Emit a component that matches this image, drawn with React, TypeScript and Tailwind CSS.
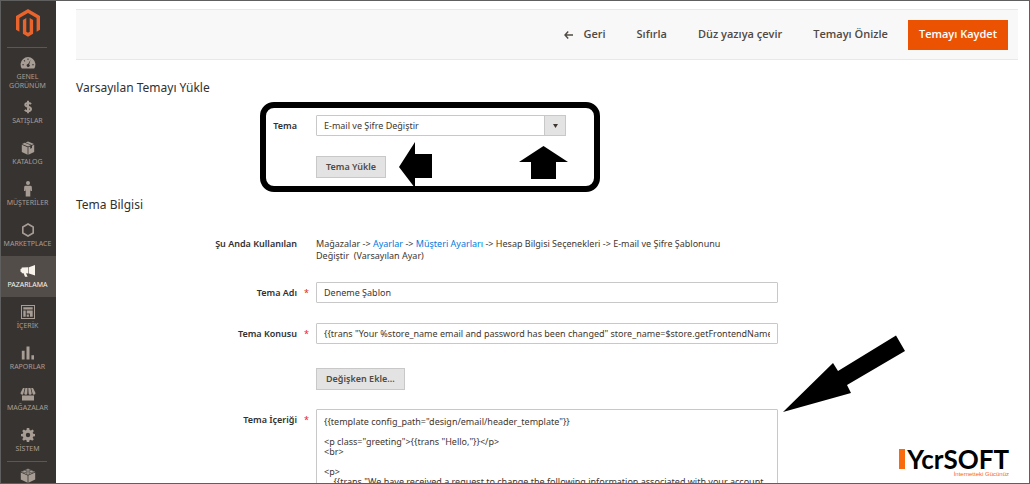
import type { ReactNode } from "react";

type MenuItem = {
  label: string;
  icon: ReactNode;
  active?: boolean;
  tall?: boolean;
};

function Icon({ children, w = 14 }: { children: ReactNode; w?: number }) {
  return (
    <svg width={w} height="14" viewBox={`0 0 ${w} 14`} fill="currentColor" aria-hidden="true">
      {children}
    </svg>
  );
}

const menu: MenuItem[] = [
  {
    label: "Genel Görünüm",
    tall: true,
    icon: (
      <Icon w={16}>
        <path
          fillRule="evenodd"
          d="M1.8 12.5A7.4 7.4 0 1 1 14.2 12.5ZM2.3 8.2h1.6v1H2.3ZM12.2 8.2h1.6v1h-1.6ZM3.6 4.6l.7-.6 1 1-.6.7ZM7.5 2.4h1v1.5h-1ZM10.6 3.8l-1.5 4.6a1.5 1.5 0 1 1-1-.3Z"
        />
      </Icon>
    ),
  },
  {
    label: "Satışlar",
    icon: (
      <Icon>
        <path
          d="M10 4.1C9.4 3.4 8.4 3 7.1 3 5.4 3 4.3 3.7 4.3 4.8 4.3 7.4 10 6.1 10 9.1 10 10.4 8.8 11.2 7 11.2 5.6 11.2 4.5 10.7 3.8 9.8M7 .8V13.2"
          fill="none"
          stroke="currentColor"
          strokeWidth="2"
        />
      </Icon>
    ),
  },
  {
    label: "Katalog",
    icon: (
      <Icon>
        <path d="M7 .4 13 2.9 10.8 3.9 4.7 1.4ZM3.8 1.8 9.9 4.3 7 5.6 1 2.9ZM.8 3.8 6.6 6.3V13.8L.8 11ZM7.4 6.3 9.2 5.5V7.8L11 7V4.7L13.2 3.8V11L7.4 13.8Z" />
      </Icon>
    ),
  },
  {
    label: "Müşteriler",
    icon: (
      <svg width="10" height="16" viewBox="0 0 10 16" fill="currentColor" aria-hidden="true">
        <circle cx="5" cy="2.1" r="2" />
        <path d="M2.5 4.7h5Q8.7 4.7 8.8 6L9 10H7.7L7.3 8V15.6H2.7V8L2.3 10H1L1.2 6Q1.3 4.7 2.5 4.7Z" />
      </svg>
    ),
  },
  {
    label: "Marketplace",
    icon: (
      <Icon>
        <path d="M7 1 12.2 4V10L7 13 1.8 10V4Z" fill="none" stroke="currentColor" strokeWidth="1.6" />
      </Icon>
    ),
  },
  {
    label: "Pazarlama",
    active: true,
    icon: (
      <Icon w={16}>
        <path d="M15 1V11.5L9 9.5V3.2ZM8.4 3.3V9.4L6 9.3 7.6 12.8H5L3.6 9.2H1.8L1.5 8 .5 7.7V5L1.5 4.7 1.8 3.5Z" />
      </Icon>
    ),
  },
  {
    label: "İçerik",
    icon: (
      <Icon>
        <path
          fillRule="evenodd"
          d="M0 0H14V14H0ZM1 1V13H13V1ZM2.3 2.3H11.7V4.6H2.3ZM2.3 5.6H4.7V11.7H2.3ZM5.7 5.6H11.7V11.7H8.9V8.5H5.7ZM5.7 9.5H7.9V11.7H5.7Z"
        />
      </Icon>
    ),
  },
  {
    label: "Raporlar",
    icon: (
      <Icon>
        <path d="M.8 4.8H3.6V13.6H.8ZM5.5 .4H8.5V13.6H5.5ZM10.4 9.3H13V13.6H10.4Z" />
      </Icon>
    ),
  },
  {
    label: "Mağazalar",
    icon: (
      <Icon w={16}>
        <path d="M3 1H4.7L3.4 6.5Q3 8 1.6 7.6 .2 7.2 .6 5.8ZM5.4 1H7.5L7.3 6.5Q7.1 7.9 5.6 7.8 4.1 7.6 4.3 6.3ZM8.3 1H10.5L11.7 6.3Q11.9 7.6 10.4 7.8 8.8 7.9 8.6 6.5ZM11.2 1H13L15.4 5.8Q15.8 7.2 14.4 7.6 13 8 12.5 6.5ZM2 8.6H14V13.6H2Z" />
      </Icon>
    ),
  },
  {
    label: "Sistem",
    icon: (
      <Icon>
        <path
          fillRule="evenodd"
          d="M5.8 0H8.2L8.6 2 9.9 2.5 11.6 1.4 12.9 3 11.7 4.5 12.2 5.7 14 6V8.2L12.2 8.5 11.7 9.7 12.8 11.2 11.2 12.8 9.7 11.7 8.5 12.2 8.2 14H5.8L5.5 12.2 4.3 11.7 2.8 12.8 1.2 11.2 2.3 9.7 1.8 8.5 0 8.2V6L1.8 5.7 2.3 4.5 1.2 3 2.8 1.4 4.3 2.5 5.5 2ZM7 4.8A2.2 2.2 0 1 0 7 9.2 2.2 2.2 0 1 0 7 4.8Z"
        />
      </Icon>
    ),
  },
];

function MagentoLogo() {
  return (
    <svg width="24" height="28" viewBox="0 0 24 28" fill="#e8642c" aria-label="Magento" role="img">
      <path d="M12 0 24 7V20.8L20.6 22.8V9L12 4 3.4 9V22.8L0 20.8V7Z" />
      <path d="M6.9 10.9 10.3 9V22.8L12 23.8 13.7 22.8V9L17.1 10.9V24.8L12 27.7 6.9 24.8Z" />
    </svg>
  );
}

function Sidebar() {
  return (
    <aside className="flex w-[55px] shrink-0 flex-col bg-[#373330] text-[#a79d95]">
      <a href="#" className="flex justify-center pt-2 pr-0.5 pb-2.5">
        <MagentoLogo />
      </a>
      <hr className="ml-1.5 w-10 border-[#5e5751]" />
      <nav>
        <ul>
          {menu.map((item) => (
            <li key={item.label}>
              <a
                href="#"
                className={`flex flex-col items-center gap-0.5 pt-2 pr-0.5 ${item.tall ? "h-[44px]" : "h-[41px]"} ${
                  item.active ? "bg-[#524d49] text-[#f7f3eb]" : ""
                }`}
              >
                <span className="flex h-3.5 items-center">{item.icon}</span>
                <span lang="tr" className="px-2 text-center text-[7px] leading-[9px] uppercase">
                  {item.label}
                </span>
              </a>
            </li>
          ))}
        </ul>
      </nav>
      <hr className="ml-1.5 w-10 border-[#5e5751]" />
      <a href="#" aria-label="Partners" className="flex justify-center pt-1.5 pr-0.5">
        <svg width="16" height="15" viewBox="0 0 16 15" fill="currentColor" aria-hidden="true">
          <path d="M.8 4.5 7.6 7.6V14.8L.8 11.5ZM15.2 4.5 8.4 7.6V14.8L15.2 11.5Z" />
          <path d="M8 .8 15 3.8 8 7 1 3.8Z" />
          <g stroke="#373330" strokeWidth=".5">
            <ellipse cx="8" cy="1.9" rx="1.9" ry="1.1" />
            <ellipse cx="4.6" cy="3.5" rx="1.9" ry="1.1" />
            <ellipse cx="11.4" cy="3.5" rx="1.9" ry="1.1" />
            <ellipse cx="8" cy="5.1" rx="1.9" ry="1.1" />
          </g>
        </svg>
      </a>
    </aside>
  );
}

function Toolbar() {
  return (
    <div className="flex h-[51px] items-center justify-end border-y border-[#e8e8e8] bg-[#f8f8f8] pr-2.5 font-['Open_Sans',sans-serif] text-[11px] font-semibold text-[#514943]">
      <button type="button" className="mr-[31px] flex items-center gap-2.5">
        <svg width="9" height="8" viewBox="0 0 9 8" fill="none" stroke="currentColor" strokeWidth="1.4" aria-hidden="true">
          <path d="M4.2 .6 1 4 4.2 7.4M1 4H9" />
        </svg>
        Geri
      </button>
      <button type="button" className="mr-[31px]">Sıfırla</button>
      <button type="button" className="mr-[31px]">Düz yazıya çevir</button>
      <button type="button" className="mr-5">Temayı Önizle</button>
      <button type="button" className="h-[30px] bg-[#eb5202] px-[11px] text-white">
        Temayı Kaydet
      </button>
    </div>
  );
}

function Field({
  label,
  id,
  required,
  children,
}: {
  label: string;
  id: string;
  required?: boolean;
  children: ReactNode;
}) {
  return (
    <div className="flex">
      <label htmlFor={id} className="w-[221px] shrink-0 pt-1 text-right font-semibold leading-[13px] text-[#303030]">
        {label}
      </label>
      <span className="w-[19px] shrink-0 pt-1 text-center leading-[13px] text-[#e22626]">
        {required && "*"}
      </span>
      <div className="min-w-0 max-w-[462px] flex-1">{children}</div>
    </div>
  );
}

const inputClass =
  "block rounded-[1px] border border-[#c8c8c8] bg-white px-[7px] text-[#41362f] outline-none focus:border-[#007bdb]";

const buttonClass =
  "block h-[22px] border border-[#c8c8c8] bg-[#e3e3e3] px-[9px] font-semibold text-[#514943]";

const templateText = `{{template config_path="design/email/header_template"}}

<p class="greeting">{{trans "Hello,"}}</p>
<br>

<p>
    {{trans "We have received a request to change the following information associated with your account
at %store_name: email, password." store_name=$store.getFrontendName()}}
</p>`;

function LoadTemplate() {
  return (
    <section>
      <h2 className="text-[12px] leading-4 text-[#303030]">Varsayılan Temayı Yükle</h2>
      <div className="relative mt-1.5 ml-[184px] h-[90px] w-[340px] rounded-[14px] border-[6px] border-black">
        <div className="flex pt-[7px]">
          <label htmlFor="template" className="w-[31px] shrink-0 pt-1 text-right font-semibold leading-[13px]">
            Tema
          </label>
          <div className="ml-[19px]">
            <div className="relative">
              <select id="template" className={`${inputClass} h-[21px] w-[250px] appearance-none pr-6`}>
                <option>E-mail ve Şifre Değiştir</option>
              </select>
              <span className="pointer-events-none absolute inset-y-0 right-0 flex w-[22px] items-center justify-center border border-[#c8c8c8] bg-[#e3e3e3]">
                <svg width="5" height="4" viewBox="0 0 5 4" fill="#41362f" aria-hidden="true">
                  <path d="M0 0H5L2.5 4Z" />
                </svg>
              </span>
            </div>
            <button type="button" className={`${buttonClass} mt-5`}>
              Tema Yükle
            </button>
          </div>
        </div>
        <svg className="absolute top-[34px] left-[133px]" width="33" height="46" viewBox="0 0 33 46" aria-hidden="true">
          <path d="M0 25 16 0V12H33V36H16V46Z" />
        </svg>
        <svg className="absolute top-[38px] left-[253px]" width="49" height="33" viewBox="0 0 49 33" aria-hidden="true">
          <path d="M24.5 0 49 16H37V33H12V16H0Z" />
        </svg>
      </div>
    </section>
  );
}

function TemplateInfo() {
  return (
    <section className="mt-[5px]">
      <h2 className="text-[12px] leading-4 text-[#303030]">Tema Bilgisi</h2>
      <div className="mt-[25px] flex leading-3">
        <span className="w-[221px] shrink-0 text-right font-semibold">Şu Anda Kullanılan</span>
        <p className="ml-[19px] text-[#41362f]">
          Mağazalar -&gt; <a href="#" className="text-[#007bdb]">Ayarlar</a> -&gt;{" "}
          <a href="#" className="text-[#007bdb]">Müşteri Ayarları</a> -&gt; Hesap Bilgisi Seçenekleri -&gt; E-mail ve
          Şifre Şablonunu
          <br />
          Değiştir&nbsp; (Varsayılan Ayar)
        </p>
      </div>
      <div className="mt-5 flex flex-col gap-5">
        <Field label="Tema Adı" id="code" required>
          <input id="code" className={`${inputClass} h-[21px] w-full`} defaultValue="Deneme Şablon" />
        </Field>
        <Field label="Tema Konusu" id="subject" required>
          <input
            id="subject"
            className={`${inputClass} h-[21px] w-full`}
            defaultValue={'{{trans "Your %store_name email and password has been changed" store_name=$store.getFrontendName()}}'}
          />
        </Field>
      </div>
      <button type="button" className={`${buttonClass} mt-6 mb-[19px] ml-60`}>
        Değişken Ekle...
      </button>
      <div className="relative">
        <Field label="Tema İçeriği" id="text" required>
          <textarea
            id="text"
            rows={24}
            className={`${inputClass} w-full resize-none overflow-hidden pt-[7px] leading-[10px]`}
            defaultValue={templateText}
          />
        </Field>
        <svg className="absolute -top-[74px] left-[707px]" width="123" height="78" viewBox="0 0 123 78" aria-hidden="true">
          <path d="M0 77 50 28 55 36 113 .5 122 16 64 50 68 58Z" />
        </svg>
      </div>
    </section>
  );
}

function Watermark() {
  return (
    <div className="absolute right-5 bottom-1 flex flex-col items-end">
      <div className="flex items-center gap-0.5">
        <span className="h-5 w-1.5 bg-[#f9690e]" />
        <span className="font-['Lato',sans-serif] text-[26px] leading-5 font-bold text-black">YcrSOFT</span>
      </div>
      <span className="font-['Liberation_Sans',sans-serif] text-[6px] leading-[10px] text-[#f9690e]">
        İnternetteki Gücünüz
      </span>
    </div>
  );
}

export default function App() {
  return (
    <div className="relative flex h-screen overflow-hidden border border-[#5f5f5f] bg-white font-['Noto_Sans',sans-serif] text-[9px] text-[#303030]">
      <Sidebar />
      <main className="min-w-0 flex-1 pt-2 pr-[11px] pl-5">
        <Toolbar />
        <div className="mt-5">
          <LoadTemplate />
          <TemplateInfo />
        </div>
      </main>
      <Watermark />
    </div>
  );
}
